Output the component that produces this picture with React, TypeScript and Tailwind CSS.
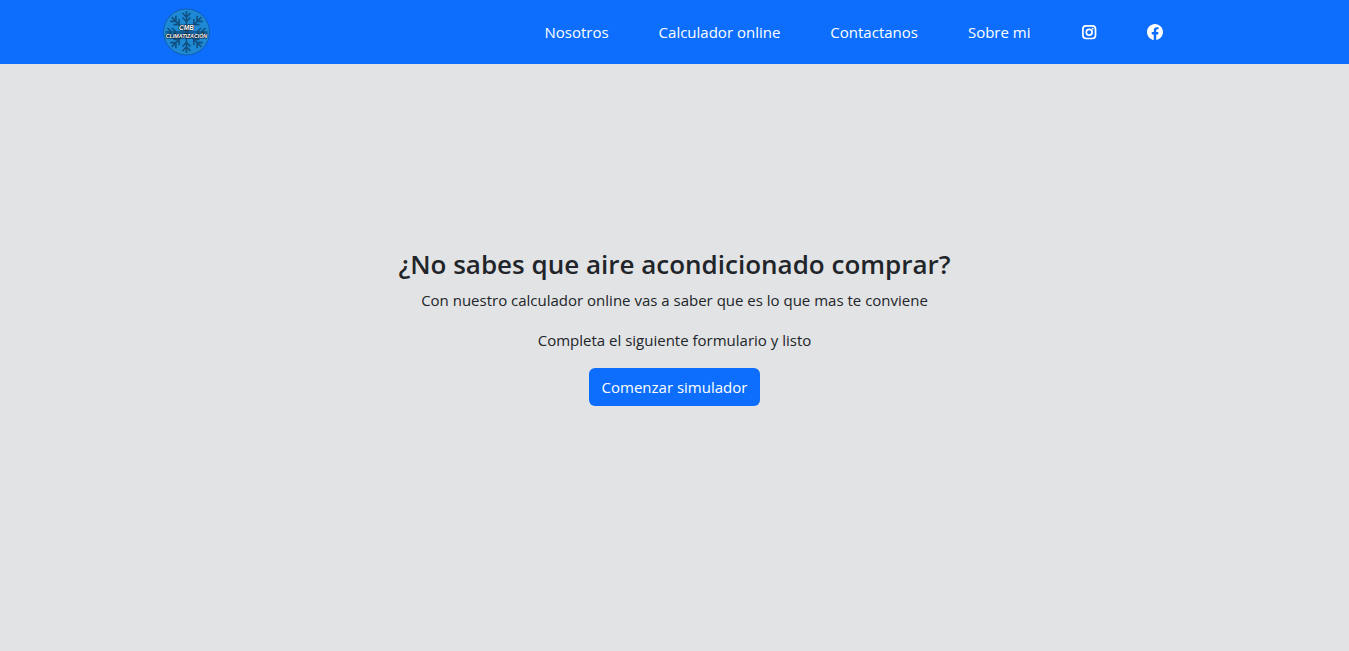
import React from "react";
import { BsFacebook } from "react-icons/bs";

const links = [
  { label: "Nosotros", href: "#nosotros" },
  { label: "Calculador online", href: "#calculador" },
  { label: "Contactanos", href: "#contacto" },
  { label: "Sobre mi", href: "#sobre-mi" },
];

const arms = [0, 45, 90, 135, 180, 225, 270, 315];

function Logo() {
  return (
    <svg viewBox="0 0 48 48" className="size-12" role="img" aria-label="CMB Climatización">
      <circle cx="23.5" cy="24" r="23" fill="#1e8ad6" stroke="#14569c" strokeWidth="0.8" />
      <g stroke="#10507f" strokeWidth="1.6" fill="none">
        {arms.map((angle) => (
          <path key={angle} d="M23.5 24V3M19.5 5L23.5 9L27.5 5M19.5 9.5L23.5 13.5L27.5 9.5" transform={`rotate(${angle} 23.5 24)`} />
        ))}
      </g>
      <g
        fill="#ffffff"
        stroke="#0a1c30"
        strokeWidth="1.2"
        paintOrder="stroke"
        fontFamily="Liberation Sans, sans-serif"
        fontWeight="700"
        fontStyle="italic"
        textAnchor="middle"
      >
        <text x="23.5" y="21.5" fontSize="6.5">CMB</text>
        <text x="23.5" y="29.5" fontSize="5.3">CLIMATIZACIÓN</text>
      </g>
    </svg>
  );
}

function InstagramIcon() {
  return (
    <svg viewBox="0 0 16 16" className="size-4" fill="none" stroke="currentColor" strokeWidth="1.7" aria-hidden="true">
      <rect x="1.9" y="1.9" width="12.6" height="12.6" rx="3.2" />
      <circle cx="8.2" cy="8.2" r="2.9" />
      <circle cx="11.7" cy="4.7" r="0.9" fill="currentColor" stroke="none" />
    </svg>
  );
}

export default function App() {
  return (
    <div className="flex min-h-screen flex-col bg-[#e2e3e5] font-['Segoe_UI','Open_Sans',sans-serif] text-[15px] leading-6 text-[#212529]">
      <header className="bg-[#0d6efd] text-white">
        <nav className="mx-auto flex h-16 max-w-5xl items-center justify-between pr-6">
          <a href="#inicio">
            <Logo />
          </a>
          <ul className="flex items-center gap-[50px]">
            {links.map((link) => (
              <li key={link.href}>
                <a href={link.href}>{link.label}</a>
              </li>
            ))}
            <li>
              <a href="#instagram" aria-label="Instagram">
                <InstagramIcon />
              </a>
            </li>
            <li>
              <a href="#facebook" aria-label="Facebook">
                <BsFacebook className="size-4" />
              </a>
            </li>
          </ul>
        </nav>
      </header>
      <main className="flex flex-1 flex-col items-center px-4 pt-46 text-center">
        <h1 className="mb-2 text-[26px] leading-8 font-semibold">¿No sabes que aire acondicionado comprar?</h1>
        <p className="mb-4">Con nuestro calculador online vas a saber que es lo que mas te conviene</p>
        <p className="mb-4">Completa el siguiente formulario y listo</p>
        <button type="button" className="rounded-md bg-[#0d6efd] px-[13px] py-[7px] text-white">
          Comenzar simulador
        </button>
      </main>
    </div>
  );
}
